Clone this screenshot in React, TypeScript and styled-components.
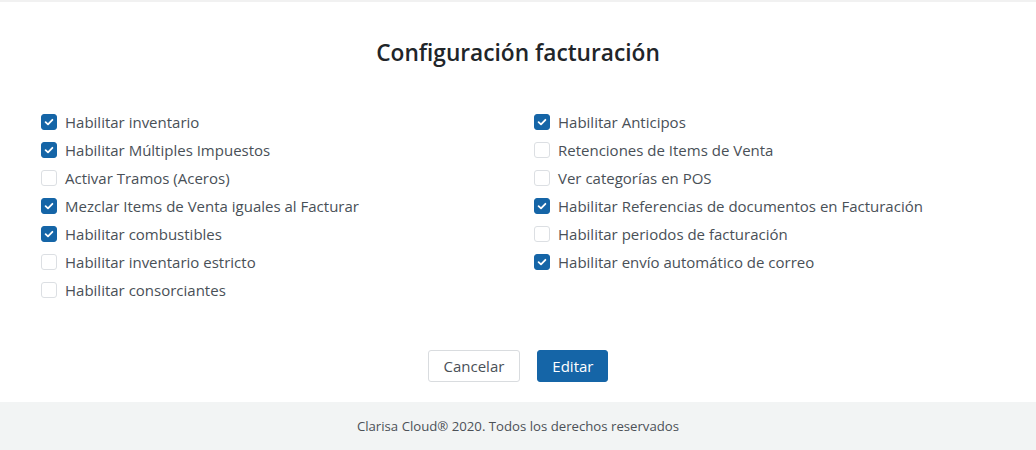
import React from "react";
import styled, { createGlobalStyle } from "styled-components";

const Global = createGlobalStyle`
  html, body { margin: 0; padding: 0; background: #fff; }
  body { font-family: "Open Sans", "Noto Sans", sans-serif; }
  * { box-sizing: border-box; }
`;

const Page = styled.div`
  border-top: 2px solid #f1f1f1;
  width: 1036px;
  height: 450px;
  display: flex;
  flex-direction: column;
`;

const Main = styled.main`
  flex: 1;
  display: flex;
  flex-direction: column;
`;

const Title = styled.h1`
  margin: 36px 0 0;
  text-align: center;
  font-size: 22.7px;
  line-height: 29px;
  font-weight: 600;
  color: #212529;
`;

const Grid = styled.div`
  display: grid;
  grid-template-columns: 1fr 1fr;
  column-gap: 32px;
  padding: 41px 41px 0;
  align-items: start;
`;

const Column = styled.div`
  display: flex;
  flex-direction: column;
`;

const Row = styled.label`
  display: flex;
  align-items: center;
  gap: 8px;
  height: 28px;
  font-size: 15px;
  color: #495057;
  cursor: pointer;
`;

const Box = styled.span<{ $checked: boolean }>`
  width: 16px;
  height: 16px;
  flex: none;
  border-radius: 3px;
  display: flex;
  align-items: center;
  justify-content: center;
  background: ${(p) => (p.$checked ? "#1565a7" : "#fff")};
  border: 1px solid ${(p) => (p.$checked ? "#1565a7" : "#dcdfe3")};
`;

const Actions = styled.div`
  display: flex;
  justify-content: center;
  gap: 17px;
  margin-top: 46px;
`;

const Button = styled.button<{ $primary?: boolean }>`
  height: 32px;
  padding: 0 ${(p) => (p.$primary ? "14px" : "15px")};
  font-family: inherit;
  font-size: 15px;
  border-radius: 3px;
  border: 1px solid ${(p) => (p.$primary ? "#1565a7" : "#d9dcdf")};
  background: ${(p) => (p.$primary ? "#1565a7" : "#fff")};
  color: ${(p) => (p.$primary ? "#fff" : "#495057")};
  cursor: pointer;
`;

const Footer = styled.footer`
  height: 48px;
  background: #f2f4f4;
  display: flex;
  align-items: center;
  justify-content: center;
  font-size: 13.2px;
  color: #4c5157;
`;

const Check = () => (
  <svg width="10" height="10" viewBox="0 0 10 10" fill="none">
    <path d="M1.6 5.2 L4 7.4 L8.4 2.8" stroke="#fff" strokeWidth="1.8" strokeLinecap="round" strokeLinejoin="round" />
  </svg>
);

type Item = { label: string; checked: boolean };

const left: Item[] = [
  { label: "Habilitar inventario", checked: true },
  { label: "Habilitar Múltiples Impuestos", checked: true },
  { label: "Activar Tramos (Aceros)", checked: false },
  { label: "Mezclar Items de Venta iguales al Facturar", checked: true },
  { label: "Habilitar combustibles", checked: true },
  { label: "Habilitar inventario estricto", checked: false },
  { label: "Habilitar consorciantes", checked: false },
];

const right: Item[] = [
  { label: "Habilitar Anticipos", checked: true },
  { label: "Retenciones de Items de Venta", checked: false },
  { label: "Ver categorías en POS", checked: false },
  { label: "Habilitar Referencias de documentos en Facturación", checked: true },
  { label: "Habilitar periodos de facturación", checked: false },
  { label: "Habilitar envío automático de correo", checked: true },
];

const List = ({ items }: { items: Item[] }) => (
  <Column>
    {items.map((it) => (
      <Row key={it.label}>
        <Box $checked={it.checked}>{it.checked && <Check />}</Box>
        {it.label}
      </Row>
    ))}
  </Column>
);

export default function App() {
  return (
    <>
      <Global />
      <Page>
        <Main>
          <Title>Configuración facturación</Title>
          <Grid>
            <List items={left} />
            <List items={right} />
          </Grid>
          <Actions>
            <Button>Cancelar</Button>
            <Button $primary>Editar</Button>
          </Actions>
        </Main>
        <Footer>Clarisa Cloud® 2020. Todos los derechos reservados</Footer>
      </Page>
    </>
  );
}
